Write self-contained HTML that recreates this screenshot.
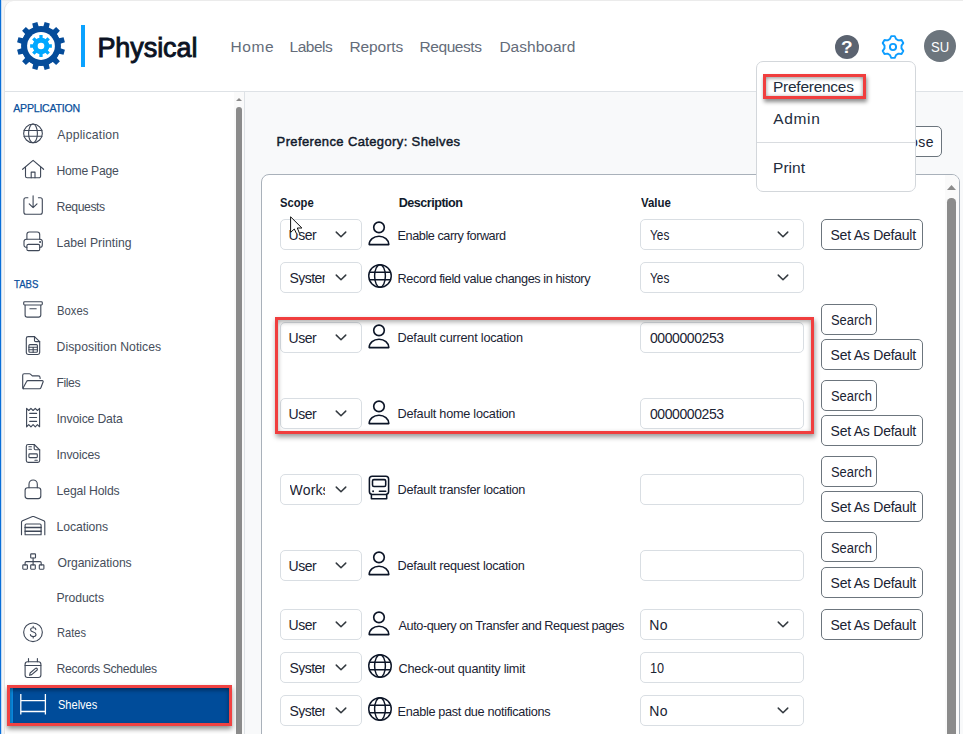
<!DOCTYPE html><html><head><meta charset="utf-8"><title>Physical - Preferences</title><style>*{box-sizing:border-box;margin:0;padding:0}
html,body{width:963px;height:734px;overflow:hidden}
body{position:relative;background:#f5f5f5;font-family:"Liberation Sans",sans-serif;color:#212529}
.abs{position:absolute}
.t{position:absolute;white-space:nowrap;line-height:1}
#win{position:absolute;left:4px;top:1px;width:959px;height:740px;background:#fff;border-top-left-radius:9px;border-left:1px solid #e4e4e4;overflow:hidden}
.sel{position:absolute;border:1px solid #d9dee3;border-radius:5px;background:#fff}
.btn{position:absolute;border:1px solid #6c757d;border-radius:5px;background:#fff}
svg{position:absolute;overflow:visible}
.ic{fill:none;stroke:#3f4858;stroke-width:1.12;stroke-linecap:round;stroke-linejoin:round}
.ik{fill:none;stroke:#0c1527;stroke-linecap:round;stroke-linejoin:round}
</style></head><body>
<div class="abs" style="left:0;top:0;width:1px;height:734px;background:#0a6fd8"></div>
<div class="abs" style="left:1px;top:0;width:1px;height:734px;background:#c5dcf3"></div>
<div class="abs" style="left:2px;top:0;width:961px;height:1px;background:#ebebeb"></div>
<div id="win">
<div class="abs" style="left:0px;top:90px;width:958px;height:1px;background:#dee2e6"></div>
<div class="abs" style="left:240px;top:91px;width:718px;height:650px;background:#f8f9fa"></div>
<div class="abs" style="left:239px;top:91px;width:1px;height:650px;background:#dee2e6"></div>
<svg width="60" height="60" style="left:6px;top:15px" viewBox="0 0 60 60"><path d="M32.24 10.63 L33.66 6.08 L38.79 7.45 L37.74 12.10 L41.63 14.35 L45.13 11.11 L48.89 14.87 L45.65 18.37 L47.90 22.26 L52.55 21.21 L53.92 26.34 L49.37 27.76 L49.37 32.24 L53.92 33.66 L52.55 38.79 L47.90 37.74 L45.65 41.63 L48.89 45.13 L45.13 48.89 L41.63 45.65 L37.74 47.90 L38.79 52.55 L33.66 53.92 L32.24 49.37 L27.76 49.37 L26.34 53.92 L21.21 52.55 L22.26 47.90 L18.37 45.65 L14.87 48.89 L11.11 45.13 L14.35 41.63 L12.10 37.74 L7.45 38.79 L6.08 33.66 L10.63 32.24 L10.63 27.76 L6.08 26.34 L7.45 21.21 L12.10 22.26 L14.35 18.37 L11.11 14.87 L14.87 11.11 L18.37 14.35 L22.26 12.10 L21.21 7.45 L26.34 6.08 L27.76 10.63Z" fill="#054c9a"/><circle cx="30" cy="30" r="19.9" fill="#054c9a"/><circle cx="30" cy="30" r="13.9" fill="#fff"/><path d="M28.32 22.18 L28.36 19.12 L31.64 19.12 L31.68 22.18 L34.34 23.28 L36.54 21.15 L38.85 23.46 L36.72 25.66 L37.82 28.32 L40.88 28.36 L40.88 31.64 L37.82 31.68 L36.72 34.34 L38.85 36.54 L36.54 38.85 L34.34 36.72 L31.68 37.82 L31.64 40.88 L28.36 40.88 L28.32 37.82 L25.66 36.72 L23.46 38.85 L21.15 36.54 L23.28 34.34 L22.18 31.68 L19.12 31.64 L19.12 28.36 L22.18 28.32 L23.28 25.66 L21.15 23.46 L23.46 21.15 L25.66 23.28Z" fill="#00a8ff"/><circle cx="30" cy="30" r="8.3" fill="#00a8ff"/><circle cx="30" cy="30" r="3.3" fill="#fff"/></svg>
<div class="abs" style="left:76px;top:24px;width:4px;height:42px;background:#0aa2ff"></div>
<span class="t" style="left:92.40px;top:34.00px;font-size:27px;color:#0b1324;letter-spacing:-0.063px;-webkit-text-stroke:0.9px #0b1324;">Physical</span>
<span class="t" style="left:225.60px;top:38.00px;font-size:15.5px;color:#646c79;letter-spacing:0.525px;">Home</span>
<span class="t" style="left:284.50px;top:38.00px;font-size:15.5px;color:#646c79;letter-spacing:-0.485px;">Labels</span>
<span class="t" style="left:344.50px;top:38.00px;font-size:15.5px;color:#646c79;letter-spacing:-0.104px;">Reports</span>
<span class="t" style="left:414.60px;top:38.00px;font-size:15.5px;color:#646c79;letter-spacing:-0.447px;">Requests</span>
<span class="t" style="left:494.40px;top:38.00px;font-size:15.5px;color:#646c79;letter-spacing:0.024px;">Dashboard</span>
<div class="abs" style="left:830px;top:34px;width:24px;height:24px;border-radius:50%;background:#5b6370"></div>
<span class="t" style="left:836.20px;top:38.00px;font-size:17px;color:#fff;font-weight:700;transform:scaleX(1.12);transform-origin:0 0;">?</span>
<svg width="24" height="24" style="left:876.2px;top:33.9px" viewBox="-12 -12 24 24"><path d="M-3.03 -8.05 L-1.75 -10.86 L1.75 -10.86 L3.03 -8.05 L5.46 -6.65 L8.53 -6.95 L10.28 -3.91 L8.49 -1.40 L8.49 1.40 L10.28 3.91 L8.53 6.95 L5.46 6.65 L3.03 8.05 L1.75 10.86 L-1.75 10.86 L-3.03 8.05 L-5.46 6.65 L-8.53 6.95 L-10.28 3.91 L-8.49 1.40 L-8.49 -1.40 L-10.28 -3.91 L-8.53 -6.95 L-5.46 -6.65Z" fill="none" stroke="#0d9dff" stroke-width="1.9" stroke-linejoin="round"/><circle cx="0" cy="0" r="3.1" fill="none" stroke="#0d9dff" stroke-width="1.9"/></svg>
<div class="abs" style="left:919px;top:29px;width:32px;height:32px;border-radius:50%;background:#6c757d"></div>
<span class="t" style="left:926.20px;top:38.00px;font-size:15.5px;color:#fff;transform:scaleX(0.8457);transform-origin:0 0;">SU</span>
<span class="t" style="left:8.30px;top:102.00px;font-size:10.6px;color:#0a4f9c;letter-spacing:-0.252px;-webkit-text-stroke:0.25px #0a4f9c;">APPLICATION</span>
<span class="t" style="left:8.60px;top:278.00px;font-size:10.6px;color:#0a4f9c;-webkit-text-stroke:0.25px #0a4f9c;transform:scaleX(0.9062);transform-origin:0 0;">TABS</span>
<span class="t" style="left:52.30px;top:128.00px;font-size:12.2px;color:#464e5b;letter-spacing:0.216px;">Application</span>
<span class="t" style="left:51.60px;top:164.00px;font-size:12.2px;color:#464e5b;letter-spacing:-0.285px;">Home Page</span>
<span class="t" style="left:51.60px;top:200.00px;font-size:12.2px;color:#464e5b;letter-spacing:-0.413px;">Requests</span>
<span class="t" style="left:51.60px;top:236.00px;font-size:12.2px;color:#464e5b;letter-spacing:0.027px;">Label Printing</span>
<span class="t" style="left:51.68px;top:304.00px;font-size:12.2px;color:#464e5b;transform:scaleX(0.9244);transform-origin:0 0;">Boxes</span>
<span class="t" style="left:51.60px;top:340.00px;font-size:12.2px;color:#464e5b;letter-spacing:0.053px;">Disposition Notices</span>
<span class="t" style="left:51.60px;top:376.00px;font-size:12.2px;color:#464e5b;letter-spacing:-0.460px;">Files</span>
<span class="t" style="left:51.60px;top:412.00px;font-size:12.2px;color:#464e5b;letter-spacing:-0.142px;">Invoice Data</span>
<span class="t" style="left:51.60px;top:448.00px;font-size:12.2px;color:#464e5b;letter-spacing:-0.174px;">Invoices</span>
<span class="t" style="left:51.60px;top:484.00px;font-size:12.2px;color:#464e5b;letter-spacing:-0.127px;">Legal Holds</span>
<span class="t" style="left:51.60px;top:520.00px;font-size:12.2px;color:#464e5b;letter-spacing:-0.097px;">Locations</span>
<span class="t" style="left:52.60px;top:556.00px;font-size:12.2px;color:#464e5b;letter-spacing:-0.092px;">Organizations</span>
<span class="t" style="left:51.60px;top:591.00px;font-size:12.2px;color:#464e5b;letter-spacing:-0.100px;">Products</span>
<span class="t" style="left:51.69px;top:626.00px;font-size:12.2px;color:#464e5b;transform:scaleX(0.9108);transform-origin:0 0;">Rates</span>
<span class="t" style="left:51.60px;top:662.00px;font-size:12.2px;color:#464e5b;letter-spacing:-0.324px;">Records Schedules</span>
<svg width="60" height="734" style="left:-5px;top:-1px" viewBox="0 0 60 734" class="ic">
<circle cx="33" cy="133.4" r="9.35"/><ellipse cx="33" cy="133.4" rx="4.4" ry="9.35"/>
<path d="M24.11 130.50 H41.89 M24.11 136.30 H41.89"/>
<path d="M22.6 169.3 L33.1 160.4 L43.6 169.3"/>
<path d="M25.5 167.2 V176.2 a1.6 1.6 0 0 0 1.6 1.6 H39 a1.6 1.6 0 0 0 1.6 -1.6 V167.2"/>
<path d="M31.2 177.8 V172.1 H35 V177.8"/>
<path d="M27.9 197.8 H25.9 a2 2 0 0 0 -2 2 V212.2 a2 2 0 0 0 2 2 H40.3 a2 2 0 0 0 2 -2 V199.8 a2 2 0 0 0 -2 -2 H38.4"/>
<path d="M33.1 195.8 V207.6 M29.2 203.8 L33.1 207.7 L37 203.8"/>
<path d="M26.9 239.2 V234.4 a2.4 2.4 0 0 1 2.4 -2.4 H37.3 a2.4 2.4 0 0 1 2.4 2.4 V239.2"/>
<path d="M26.9 247.3 H26.4 a2.4 2.4 0 0 1 -2.4 -2.4 V241.6 a2.4 2.4 0 0 1 2.4 -2.4 H39.9 a2.4 2.4 0 0 1 2.4 2.4 V244.9 a2.4 2.4 0 0 1 -2.4 2.4 H39.7"/>
<rect x="26.9" y="244.4" width="12.8" height="6.2" rx="1.4"/>
<circle cx="40.1" cy="241.9" r="0.45" fill="#3d4656"/>
<rect x="23.7" y="301.8" width="18.6" height="3.2" rx="0.9"/>
<path d="M25.1 305.2 V315 a2.1 2.1 0 0 0 2.1 2.1 H38.7 a2.1 2.1 0 0 0 2.1 -2.1 V305.2"/>
<path d="M29.9 308.8 H36.2"/>
<path d="M34.5 336.6 H28.2 a1.9 1.9 0 0 0 -1.9 1.9 V352.6 a1.9 1.9 0 0 0 1.9 1.9 H37.8 a1.9 1.9 0 0 0 1.9 -1.9 V341.6 Z"/>
<path d="M34.5 336.6 V340.4 a1.2 1.2 0 0 0 1.2 1.2 H39.7"/>
<rect x="28.9" y="344.6" width="8.5" height="7.6" rx="1"/>
<path d="M28.9 347.3 H37.4 M28.9 349.8 H37.4 M33.15 347.3 V352.2"/>
<path d="M23.2 388.8 a1.4 1.4 0 0 1 -0.5 -1.1 V375.3 a1.5 1.5 0 0 1 1.5 -1.5 H29.4 a1.5 1.5 0 0 1 1 0.4 L32.3 375.9 H38.2 a1.9 1.9 0 0 1 1.9 1.9 V378.5"/>
<path d="M26.6 381.5 a1.4 1.4 0 0 1 1.3 -0.9 H42.3 a0.9 0.9 0 0 1 0.85 1.2 L40.9 387.8 a1.5 1.5 0 0 1 -1.4 1 H24.2 a0.9 0.9 0 0 1 -0.85 -1.2 Z"/>
<path d="M26.6 409.5 V408.3 L28.77 410.5 L30.93 408.3 L33.1 410.5 L35.27 408.3 L37.43 410.5 L39.6 408.3 V426.8 L37.43 424.6 L35.27 426.8 L33.1 424.6 L30.93 426.8 L28.77 424.6 L26.6 426.8 Z"/>
<path d="M29.7 413.4 H36.6 M29.7 417.5 H36.6 M29.7 421.4 H36.6"/>
<path d="M34.2 444.5 H28.2 a1.9 1.9 0 0 0 -1.9 1.9 V460.5 a1.9 1.9 0 0 0 1.9 1.9 H37.8 a1.9 1.9 0 0 0 1.9 -1.9 V449.8 Z"/>
<path d="M34.2 444.5 V448.6 a1.2 1.2 0 0 0 1.2 1.2 H39.7"/>
<path d="M28.9 446.7 H31.4 M28.9 449.3 H31.4 M34.9 460.2 H37.3"/>
<rect x="28.9" y="453.9" width="8.4" height="3.7" rx="0.8"/>
<rect x="25.1" y="487.7" width="15.7" height="10.9" rx="2.6"/>
<path d="M29 487.7 V484.2 a4.15 4.15 0 0 1 8.3 0 V487.7"/>
<path d="M21.5 534.8 V522.3 a1.6 1.6 0 0 1 1 -1.5 L32.5 516.6 a1.6 1.6 0 0 1 1.2 0 L43.8 520.8 a1.6 1.6 0 0 1 1 1.5 V534.8"/>
<path d="M25.1 534.8 V525.2 a1.2 1.2 0 0 1 1.2 -1.2 H39.9 a1.2 1.2 0 0 1 1.2 1.2 V534.8 Z"/>
<path d="M25.1 527.6 H41.1 M25.1 531.2 H41.1" stroke-width="1.5"/>
<rect x="22.8" y="564.9" width="4.6" height="4.3" rx="0.6"/>
<rect x="30.7" y="564.9" width="4.6" height="4.3" rx="0.6"/>
<rect x="39.3" y="564.9" width="4.6" height="4.3" rx="0.6"/>
<rect x="30.7" y="553.9" width="4.8" height="4.1" rx="0.6"/>
<path d="M33.1 558 V564.9 M25.1 564.9 V562.8 a1.2 1.2 0 0 1 1.2 -1.2 H40 a1.2 1.2 0 0 1 1.2 1.2 V564.9"/>
<circle cx="33" cy="632.3" r="9.35"/>
<path d="M35.8 629.6 C35.8 628.2 34.6 627.7 33.2 627.7 C31.8 627.7 30.6 628.4 30.6 629.7 C30.6 632.9 36 631.2 36 634.4 C36 635.8 34.7 636.5 33.2 636.5 C31.7 636.5 30.4 635.9 30.4 634.5 M33.2 626.3 V627.7 M33.2 636.5 V638"/>
<rect x="25.1" y="661.8" width="15.8" height="15.7" rx="2.5"/>
<path d="M25.1 665.5 H40.9 M28.5 658.6 V661.8 M37.4 658.6 V661.8"/>
<path d="M29.6 675.3 L30.1 673 L35.5 668.4 a1.2 1.2 0 0 1 1.7 1.6 L31.7 674.6 Z"/>
</svg>
<div class="abs" style="left:229px;top:91px;width:10px;height:650px;background:#fafafa"></div>
<svg width="6" height="3" style="left:231px;top:97px" viewBox="0 0 6 3"><path d="M0 3 L3 0 L6 3Z" fill="#8b8b8b"/></svg>
<div class="abs" style="left:231px;top:106px;width:6px;height:640px;border-radius:3px;background:#8b8b8b"></div>
<div class="abs" style="left:2px;top:684px;width:225px;height:41px;background:#f04242;box-shadow:0 3px 5px rgba(0,0,0,.45)"></div>
<div class="abs" style="left:5px;top:687px;width:219px;height:35px;background:linear-gradient(to right,#0b8fe6 3px,#004c9a 3px);box-shadow:inset 0 2px 4px rgba(0,0,0,.42)"></div>
<svg width="30" height="24" style="left:13px;top:691px" viewBox="18 692 30 24"><path d="M20.8 694.1 V714.5 M45.4 694.1 V714.5 M20.8 700.7 H45.4 M20.8 711.5 H45.4" fill="none" stroke="#fff" stroke-width="1.3"/></svg>
<span class="t" style="left:52.60px;top:698.00px;font-size:12.2px;color:#fff;transform:scaleX(0.9061);transform-origin:0 0;">Shelves</span>
<span class="t" style="left:271.60px;top:134.00px;font-size:13px;color:#111a2b;letter-spacing:0.373px;-webkit-text-stroke:0.45px #111a2b;">Preference Category: Shelves</span>
<div class="btn" style="left:875px;top:125.4px;width:61.6px;height:30.3px;"></div>
<span class="t" style="left:891.00px;top:134.00px;font-size:14px;color:#1a2333;letter-spacing:0.448px;">Close</span>
<div class="abs" style="left:256px;top:173.4px;width:698.5px;height:600px;background:#fff;border:1px solid #a9b1ba;border-radius:8px"></div>
<div class="abs" style="left:940px;top:174.4px;width:13.5px;height:560px;background:#fafafa;border-top-right-radius:7px"></div>
<svg width="9" height="5" style="left:942px;top:184px" viewBox="0 0 9 5"><path d="M0 5 L4.5 0 L9 5Z" fill="#8b8b8b"/></svg>
<div class="abs" style="left:942.3px;top:197px;width:8.5px;height:560px;border-radius:4.2px;background:#8b8b8b"></div>
<span class="t" style="left:275.30px;top:196.00px;font-size:12.6px;color:#111a2b;font-weight:700;transform:scaleX(0.8918);transform-origin:0 0;">Scope</span>
<span class="t" style="left:393.70px;top:196.00px;font-size:12.6px;color:#111a2b;font-weight:700;letter-spacing:-0.499px;">Description</span>
<span class="t" style="left:635.90px;top:196.00px;font-size:12.6px;color:#111a2b;font-weight:700;transform:scaleX(0.9088);transform-origin:0 0;">Value</span>
<div class="sel" style="left:275.2px;top:218.25px;width:81.8px;height:30.5px;"></div>
<span class="t" style="left:283.60px;top:227.00px;font-size:14px;color:#1a2333;letter-spacing:-0.532px;">User</span>
<svg width="12" height="7" style="left:330px;top:230px" viewBox="0 0 12 7"><path d="M1.25 1.1 L6 5.8 L10.75 1.1" fill="none" stroke="#343a40" stroke-width="1.5" stroke-linecap="round" stroke-linejoin="round"/></svg>
<svg width="24" height="26" style="left:361.55px;top:218.5px" viewBox="-12 -15 24 26"><g stroke-width="1.65"><circle cx="0" cy="-7.65" r="5.3" class="ik"/><path d="M-9.8 9.55 A9.8 8.3 0 0 1 9.8 9.55 Z" class="ik" stroke-linejoin="miter"/></g></svg>
<span class="t" style="left:392.60px;top:229.00px;font-size:12.7px;color:#1a2333;letter-spacing:-0.453px;">Enable carry forward</span>
<div class="sel" style="left:635.2px;top:218.25px;width:163.8px;height:30.5px;"></div>
<span class="t" style="left:645.00px;top:227.00px;font-size:14px;color:#1a2333;transform:scaleX(0.8451);transform-origin:0 0;">Yes</span>
<svg width="12" height="7" style="left:771.9px;top:230.3px" viewBox="0 0 12 7"><path d="M1.25 1.1 L6 5.8 L10.75 1.1" fill="none" stroke="#343a40" stroke-width="1.5" stroke-linecap="round" stroke-linejoin="round"/></svg>
<div class="btn" style="left:816.3px;top:218.25px;width:101.7px;height:30.5px;"></div>
<span class="t" style="left:825.50px;top:227.00px;font-size:14px;color:#1a2333;letter-spacing:-0.238px;">Set As Default</span>
<div class="sel" style="left:275.2px;top:261.25px;width:81.8px;height:30.5px;"></div>
<span class="t" style="left:284.60px;top:270.00px;font-size:14px;color:#1a2333;letter-spacing:-0.563px;overflow:hidden;width:35.10px;">System</span>
<svg width="12" height="7" style="left:330px;top:273px" viewBox="0 0 12 7"><path d="M1.25 1.1 L6 5.8 L10.75 1.1" fill="none" stroke="#343a40" stroke-width="1.5" stroke-linecap="round" stroke-linejoin="round"/></svg>
<svg width="24" height="24" style="left:363.2px;top:263px" viewBox="-12 -12 24 24"><g stroke-width="1.45"><circle r="11.25" class="ik"/><ellipse rx="5.4" ry="11.25" class="ik"/><path d="M-10.59 -3.8 H10.59 M-10.59 3.8 H10.59" class="ik"/></g></svg>
<span class="t" style="left:392.60px;top:272.00px;font-size:12.7px;color:#1a2333;letter-spacing:-0.400px;">Record field value changes in history</span>
<div class="sel" style="left:635.2px;top:261.25px;width:163.8px;height:30.5px;"></div>
<span class="t" style="left:645.00px;top:270.00px;font-size:14px;color:#1a2333;transform:scaleX(0.8451);transform-origin:0 0;">Yes</span>
<svg width="12" height="7" style="left:771.9px;top:273.3px" viewBox="0 0 12 7"><path d="M1.25 1.1 L6 5.8 L10.75 1.1" fill="none" stroke="#343a40" stroke-width="1.5" stroke-linecap="round" stroke-linejoin="round"/></svg>
<div class="sel" style="left:275.2px;top:321.25px;width:81.8px;height:30.5px;"></div>
<span class="t" style="left:283.60px;top:330.00px;font-size:14px;color:#1a2333;letter-spacing:-0.532px;">User</span>
<svg width="12" height="7" style="left:330px;top:333px" viewBox="0 0 12 7"><path d="M1.25 1.1 L6 5.8 L10.75 1.1" fill="none" stroke="#343a40" stroke-width="1.5" stroke-linecap="round" stroke-linejoin="round"/></svg>
<svg width="24" height="26" style="left:361.55px;top:321.5px" viewBox="-12 -15 24 26"><g stroke-width="1.65"><circle cx="0" cy="-7.65" r="5.3" class="ik"/><path d="M-9.8 9.55 A9.8 8.3 0 0 1 9.8 9.55 Z" class="ik" stroke-linejoin="miter"/></g></svg>
<span class="t" style="left:392.60px;top:331.00px;font-size:12.7px;color:#1a2333;letter-spacing:-0.222px;">Default current location</span>
<div class="sel" style="left:635.2px;top:321.25px;width:163.8px;height:30.5px;"></div>
<span class="t" style="left:645.00px;top:330.00px;font-size:14px;color:#1a2333;letter-spacing:-0.419px;">0000000253</span>
<div class="btn" style="left:816.2px;top:303.1px;width:55.6px;height:30.5px;"></div>
<span class="t" style="left:825.60px;top:312.00px;font-size:14px;color:#1a2333;transform:scaleX(0.9226);transform-origin:0 0;">Search</span>
<div class="btn" style="left:816.2px;top:338.3px;width:101.7px;height:30.5px;"></div>
<span class="t" style="left:825.60px;top:347.00px;font-size:14px;color:#1a2333;letter-spacing:-0.238px;">Set As Default</span>
<div class="sel" style="left:275.2px;top:397.25px;width:81.8px;height:30.5px;"></div>
<span class="t" style="left:283.60px;top:406.00px;font-size:14px;color:#1a2333;letter-spacing:-0.532px;">User</span>
<svg width="12" height="7" style="left:330px;top:409px" viewBox="0 0 12 7"><path d="M1.25 1.1 L6 5.8 L10.75 1.1" fill="none" stroke="#343a40" stroke-width="1.5" stroke-linecap="round" stroke-linejoin="round"/></svg>
<svg width="24" height="26" style="left:361.55px;top:397.5px" viewBox="-12 -15 24 26"><g stroke-width="1.65"><circle cx="0" cy="-7.65" r="5.3" class="ik"/><path d="M-9.8 9.55 A9.8 8.3 0 0 1 9.8 9.55 Z" class="ik" stroke-linejoin="miter"/></g></svg>
<span class="t" style="left:392.60px;top:407.00px;font-size:12.7px;color:#1a2333;letter-spacing:-0.248px;">Default home location</span>
<div class="sel" style="left:635.2px;top:397.25px;width:163.8px;height:30.5px;"></div>
<span class="t" style="left:645.00px;top:406.00px;font-size:14px;color:#1a2333;letter-spacing:-0.419px;">0000000253</span>
<div class="btn" style="left:816.2px;top:379.1px;width:55.6px;height:30.5px;"></div>
<span class="t" style="left:825.60px;top:388.00px;font-size:14px;color:#1a2333;transform:scaleX(0.9226);transform-origin:0 0;">Search</span>
<div class="btn" style="left:816.2px;top:414.3px;width:101.7px;height:30.5px;"></div>
<span class="t" style="left:825.60px;top:423.00px;font-size:14px;color:#1a2333;letter-spacing:-0.238px;">Set As Default</span>
<div class="sel" style="left:275.2px;top:473.15px;width:81.8px;height:30.5px;"></div>
<span class="t" style="left:284.60px;top:482.00px;font-size:14px;color:#1a2333;letter-spacing:0.143px;overflow:hidden;width:35.10px;">Workstation</span>
<svg width="12" height="7" style="left:330px;top:484.9px" viewBox="0 0 12 7"><path d="M1.25 1.1 L6 5.8 L10.75 1.1" fill="none" stroke="#343a40" stroke-width="1.5" stroke-linecap="round" stroke-linejoin="round"/></svg>
<svg width="24" height="26" style="left:361.5px;top:474.4px" viewBox="-12 -14 24 26"><g stroke-width="1.55"><rect x="-9.6" y="-12.7" width="19.2" height="18.1" rx="2.8" class="ik"/><rect x="-6.5" y="-9.4" width="13.2" height="6.9" rx="1.4" class="ik"/><path d="M0.4 2.3 H6.8 M-7.6 5.6 V9.7 H7.7 V5.6" class="ik" stroke-linejoin="miter"/><circle cx="-5.9" cy="2.3" r="0.95" fill="#0c1527"/></g></svg>
<span class="t" style="left:392.60px;top:483.00px;font-size:12.7px;color:#1a2333;letter-spacing:-0.260px;">Default transfer location</span>
<div class="sel" style="left:635.2px;top:473.15px;width:163.8px;height:30.5px;"></div>
<div class="btn" style="left:816.2px;top:455px;width:55.6px;height:30.5px;"></div>
<span class="t" style="left:825.60px;top:464.00px;font-size:14px;color:#1a2333;transform:scaleX(0.9226);transform-origin:0 0;">Search</span>
<div class="btn" style="left:816.2px;top:490.2px;width:101.7px;height:30.5px;"></div>
<span class="t" style="left:825.60px;top:499.00px;font-size:14px;color:#1a2333;letter-spacing:-0.238px;">Set As Default</span>
<div class="sel" style="left:275.2px;top:549.05px;width:81.8px;height:30.5px;"></div>
<span class="t" style="left:283.60px;top:558.00px;font-size:14px;color:#1a2333;letter-spacing:-0.532px;">User</span>
<svg width="12" height="7" style="left:330px;top:560.8px" viewBox="0 0 12 7"><path d="M1.25 1.1 L6 5.8 L10.75 1.1" fill="none" stroke="#343a40" stroke-width="1.5" stroke-linecap="round" stroke-linejoin="round"/></svg>
<svg width="24" height="26" style="left:361.55px;top:549.3px" viewBox="-12 -15 24 26"><g stroke-width="1.65"><circle cx="0" cy="-7.65" r="5.3" class="ik"/><path d="M-9.8 9.55 A9.8 8.3 0 0 1 9.8 9.55 Z" class="ik" stroke-linejoin="miter"/></g></svg>
<span class="t" style="left:392.60px;top:559.00px;font-size:12.7px;color:#1a2333;letter-spacing:-0.267px;">Default request location</span>
<div class="sel" style="left:635.2px;top:549.05px;width:163.8px;height:30.5px;"></div>
<div class="btn" style="left:816.2px;top:530.9px;width:55.6px;height:30.5px;"></div>
<span class="t" style="left:825.60px;top:540.00px;font-size:14px;color:#1a2333;transform:scaleX(0.9226);transform-origin:0 0;">Search</span>
<div class="btn" style="left:816.2px;top:566.1px;width:101.7px;height:30.5px;"></div>
<span class="t" style="left:825.60px;top:575.00px;font-size:14px;color:#1a2333;letter-spacing:-0.238px;">Set As Default</span>
<div class="sel" style="left:275.2px;top:608.25px;width:81.8px;height:30.5px;"></div>
<span class="t" style="left:283.60px;top:617.00px;font-size:14px;color:#1a2333;letter-spacing:-0.532px;">User</span>
<svg width="12" height="7" style="left:330px;top:620px" viewBox="0 0 12 7"><path d="M1.25 1.1 L6 5.8 L10.75 1.1" fill="none" stroke="#343a40" stroke-width="1.5" stroke-linecap="round" stroke-linejoin="round"/></svg>
<svg width="24" height="26" style="left:361.55px;top:608.5px" viewBox="-12 -15 24 26"><g stroke-width="1.65"><circle cx="0" cy="-7.65" r="5.3" class="ik"/><path d="M-9.8 9.55 A9.8 8.3 0 0 1 9.8 9.55 Z" class="ik" stroke-linejoin="miter"/></g></svg>
<span class="t" style="left:393.60px;top:619.00px;font-size:12.7px;color:#1a2333;letter-spacing:-0.452px;">Auto-query on Transfer and Request pages</span>
<div class="sel" style="left:635.2px;top:608.25px;width:163.8px;height:30.5px;"></div>
<span class="t" style="left:644.30px;top:617.00px;font-size:14px;color:#1a2333;letter-spacing:0.290px;">No</span>
<svg width="12" height="7" style="left:771.9px;top:620.3px" viewBox="0 0 12 7"><path d="M1.25 1.1 L6 5.8 L10.75 1.1" fill="none" stroke="#343a40" stroke-width="1.5" stroke-linecap="round" stroke-linejoin="round"/></svg>
<div class="btn" style="left:816.3px;top:608.25px;width:101.7px;height:30.5px;"></div>
<span class="t" style="left:825.50px;top:617.00px;font-size:14px;color:#1a2333;letter-spacing:-0.238px;">Set As Default</span>
<div class="sel" style="left:275.2px;top:651.15px;width:81.8px;height:30.5px;"></div>
<span class="t" style="left:284.60px;top:660.00px;font-size:14px;color:#1a2333;letter-spacing:-0.563px;overflow:hidden;width:35.10px;">System</span>
<svg width="12" height="7" style="left:330px;top:662.9px" viewBox="0 0 12 7"><path d="M1.25 1.1 L6 5.8 L10.75 1.1" fill="none" stroke="#343a40" stroke-width="1.5" stroke-linecap="round" stroke-linejoin="round"/></svg>
<svg width="24" height="24" style="left:363.2px;top:652.9px" viewBox="-12 -12 24 24"><g stroke-width="1.45"><circle r="11.25" class="ik"/><ellipse rx="5.4" ry="11.25" class="ik"/><path d="M-10.59 -3.8 H10.59 M-10.59 3.8 H10.59" class="ik"/></g></svg>
<span class="t" style="left:393.60px;top:662.00px;font-size:12.7px;color:#1a2333;letter-spacing:-0.223px;">Check-out quantity limit</span>
<div class="sel" style="left:635.2px;top:651.15px;width:163.8px;height:30.5px;"></div>
<span class="t" style="left:645.09px;top:660.00px;font-size:14px;color:#1a2333;transform:scaleX(0.9063);transform-origin:0 0;">10</span>
<div class="sel" style="left:275.2px;top:694.15px;width:81.8px;height:30.5px;"></div>
<span class="t" style="left:284.60px;top:703.00px;font-size:14px;color:#1a2333;letter-spacing:-0.563px;overflow:hidden;width:35.10px;">System</span>
<svg width="12" height="7" style="left:330px;top:705.9px" viewBox="0 0 12 7"><path d="M1.25 1.1 L6 5.8 L10.75 1.1" fill="none" stroke="#343a40" stroke-width="1.5" stroke-linecap="round" stroke-linejoin="round"/></svg>
<svg width="24" height="24" style="left:363.2px;top:695.9px" viewBox="-12 -12 24 24"><g stroke-width="1.45"><circle r="11.25" class="ik"/><ellipse rx="5.4" ry="11.25" class="ik"/><path d="M-10.59 -3.8 H10.59 M-10.59 3.8 H10.59" class="ik"/></g></svg>
<span class="t" style="left:392.60px;top:705.00px;font-size:12.7px;color:#1a2333;letter-spacing:-0.332px;">Enable past due notifications</span>
<div class="sel" style="left:635.2px;top:694.15px;width:163.8px;height:30.5px;"></div>
<span class="t" style="left:644.30px;top:703.00px;font-size:14px;color:#1a2333;letter-spacing:0.290px;">No</span>
<svg width="12" height="7" style="left:771.9px;top:706.2px" viewBox="0 0 12 7"><path d="M1.25 1.1 L6 5.8 L10.75 1.1" fill="none" stroke="#343a40" stroke-width="1.5" stroke-linecap="round" stroke-linejoin="round"/></svg>
<div class="abs" style="left:270.1px;top:316px;width:539.2px;height:116.7px;border:3px solid #f03e3e;box-shadow:1px 3px 5px rgba(0,0,0,.4), inset 0 2px 5px rgba(0,0,0,.33)"></div>
<div class="abs" style="left:751px;top:60px;width:160px;height:131px;background:#fff;border:1px solid #d3d7db;border-radius:7px"></div>
<div class="abs" style="left:752px;top:141px;width:158px;height:1px;background:#d9dce0"></div>
<div class="abs" style="left:758px;top:73px;width:103px;height:25px;border:3px solid #f03e3e;box-shadow:1px 3px 4px rgba(0,0,0,.45), inset 0 1px 4px rgba(0,0,0,.45)"></div>
<span class="t" style="left:768.00px;top:78.00px;font-size:15.5px;color:#222c3c;letter-spacing:-0.262px;">Preferences</span>
<span class="t" style="left:768.30px;top:110.00px;font-size:15.5px;color:#222c3c;letter-spacing:0.647px;">Admin</span>
<span class="t" style="left:768.00px;top:159.00px;font-size:15.5px;color:#222c3c;letter-spacing:0.059px;">Print</span>
<svg width="14" height="21" style="left:284.7px;top:214.6px" viewBox="0 0 14 21"><path d="M6.5 17.6 L4.3 13 L0.6 16.4 V0.8 L11.9 12 H7.3 L9.6 17.6 Z" fill="#fff"/><path d="M6.5 17.6 L4.3 13 L0.6 16.4 V0.8 L11.9 12 H7.3 L9.6 17.6" fill="none" stroke="#111" stroke-width="1" stroke-linejoin="miter"/></svg>
</div></body></html>
